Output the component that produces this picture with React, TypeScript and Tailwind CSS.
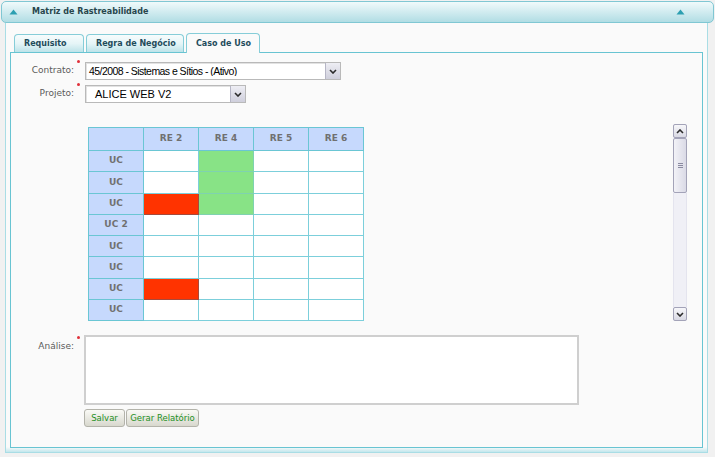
import React from 'react';

const cols = ['RE 2', 'RE 4', 'RE 5', 'RE 6'];

// g = verde, r = vermelho
const rows = [
  { label: 'UC', cells: ['', 'g', '', ''] },
  { label: 'UC', cells: ['', 'g', '', ''] },
  { label: 'UC', cells: ['r', 'g', '', ''] },
  { label: 'UC 2', cells: ['', '', '', ''] },
  { label: 'UC', cells: ['', '', '', ''] },
  { label: 'UC', cells: ['', '', '', ''] },
  { label: 'UC', cells: ['r', '', '', ''] },
  { label: 'UC', cells: ['', '', '', ''] },
];

const TriUp = () => (
  <svg width="9" height="6" viewBox="0 0 9 6">
    <path d="M0.5 5.5 L4.5 0.5 L8.5 5.5 Z" fill="#2c9fb1" />
  </svg>
);

const Chevron = ({ up = false }: { up?: boolean }) => (
  <svg width="8" height="5" viewBox="0 0 8 5">
    <path
      d={up ? 'M1 4 L4 1 L7 4' : 'M1 1 L4 4 L7 1'}
      fill="none"
      stroke="#2b2b2b"
      strokeWidth="1.6"
    />
  </svg>
);

const Required = () => <span className="block w-[3px] h-[3px] rounded-full bg-[#e0303a]" />;

const Select = ({ text, width, textClass }: { text: string; width: string; textClass: string }) => (
  <div className={`${width} h-[18px] flex items-center bg-white border border-[#b9b9b9] shadow-[inset_1px_1px_0_#e2e2e2]`}>
    <span className={`flex-1 ${textClass} text-black font-['Liberation_Sans',Arial,sans-serif] leading-none truncate`}>
      {text}
    </span>
    <div className="w-[15px] h-[16px] flex items-center justify-center bg-gradient-to-b from-[#eeeef4] to-[#cfcfdc] border-l border-[#b6b6c6]">
      <Chevron />
    </div>
  </div>
);

const Tab = ({ label, width, active = false }: { label: string; width: string; active?: boolean }) => (
  <div
    className={`${width} flex items-center pl-[9px] rounded-t-[4px] border border-b-0 border-[#86cdd8] text-[8px] font-bold text-[#1f4c5c] ${
      active ? 'h-[20px] bg-[#fafafa]' : 'h-[18px] mb-[1px] bg-gradient-to-b from-[#f7fcfd] via-[#e6f5f7] to-[#bde3e9]'
    }`}
  >
    {label}
  </div>
);

const ScrollBtn = ({ up = false }: { up?: boolean }) => (
  <div className="h-[14px] flex items-center justify-center rounded-[2px] border border-[#a3a3b8] bg-gradient-to-b from-[#f7f7fa] to-[#d9d9e4]">
    <Chevron up={up} />
  </div>
);

export default function App() {
  return (
    <div className="w-[715px] h-[457px] bg-[#f1f1f1] pt-[1px] overflow-hidden font-['DejaVu_Sans',Verdana,sans-serif]">
      {/* cabeçalho do painel */}
      <div className="mx-[1px] h-[22px] rounded-[5px] border border-[#80c7d3] bg-gradient-to-b from-[#f0fafb] to-[#b1dde4] flex items-center pl-[7px] pr-[28px]">
        <TriUp />
        <span className="ml-[14px] text-[8px] font-bold text-[#27464c]">Matriz de Rastreabilidade</span>
        <span className="ml-auto">
          <TriUp />
        </span>
      </div>

      {/* corpo */}
      <div className="ml-[5px] w-[703px] h-[430px] border-x border-b border-[#a9dde5] px-[4px] pt-[10px] bg-[linear-gradient(to_bottom,#fafafa_calc(100%_-_5px),#c2e7ed)]">
        <div className="flex items-end gap-[2px] pl-[4px] -mb-px relative z-10">
          <Tab label="Requisito" width="w-[70px]" />
          <Tab label="Regra de Negócio" width="w-[98px]" />
          <Tab label="Caso de Uso" width="w-[74px]" active />
        </div>

        <div className="w-[693px] h-[396px] border border-[#68c4d2] bg-[#fafafa] pt-[9px]">
          {/* Contrato */}
          <div className="flex items-center">
            <div className="w-[63px] text-right text-[9px] text-[#5a5a5a]">Contrato:</div>
            <div className="w-[11px] self-start pl-[3px] -mt-[2px]">
              <Required />
            </div>
            <Select
              text="45/2008 - Sistemas e Sítios - (Ativo)"
              width="w-[256px]"
              textClass="pl-[3px] text-[10.5px] tracking-[-0.55px]"
            />
          </div>

          {/* Projeto */}
          <div className="flex items-center mt-[5px]">
            <div className="w-[63px] text-right text-[9px] text-[#5a5a5a]">Projeto:</div>
            <div className="w-[11px] self-start pl-[3px] -mt-[2px]">
              <Required />
            </div>
            <Select text="ALICE WEB V2" width="w-[161px]" textClass="pl-[9px] text-[11px]" />
          </div>

          {/* matriz */}
          <div className="ml-[74px] mt-[21px] w-[603px] h-[197px] flex">
            <div className="flex-1 pl-[3px] pt-[3px]">
              <table className="border-collapse border border-[#55bfce] text-[9px] font-bold text-[#707070]">
                <thead>
                  <tr className="h-[23px] bg-[#c6d9fd]">
                    <th className="w-[55px] border border-[#6ac6d4]" />
                    {cols.map((c) => (
                      <th key={c} className="w-[55px] border border-[#6ac6d4] font-bold">
                        {c}
                      </th>
                    ))}
                  </tr>
                </thead>
                <tbody>
                  {rows.map((r, i) => (
                    <tr key={i} className="h-[21.3px]">
                      <td className="bg-[#c6d9fd] border border-[#6ac6d4] text-center">{r.label}</td>
                      {r.cells.map((c, j) => (
                        <td
                          key={j}
                          className={
                            c === 'g'
                              ? 'bg-[#88e386] border border-[#7fd2b0]'
                              : c === 'r'
                              ? 'bg-[#ff3300] border border-[#a64a3c]'
                              : 'bg-white border border-[#7ccfdb]'
                          }
                        />
                      ))}
                    </tr>
                  ))}
                </tbody>
              </table>
            </div>
            <div className="w-[14px] mr-[1px] flex flex-col bg-[#f0f0f6]">
              <ScrollBtn up />
              <div className="h-[55px] flex items-center justify-center rounded-[2px] border border-[#a3a3b8] bg-gradient-to-r from-[#f2f2f7] to-[#dadae6]">
                <div className="flex flex-col gap-[1px]">
                  <span className="block w-[5px] h-px bg-[#8a8aa0]" />
                  <span className="block w-[5px] h-px bg-[#8a8aa0]" />
                  <span className="block w-[5px] h-px bg-[#8a8aa0]" />
                </div>
              </div>
              <div className="flex-1 border-x border-[#e4e4ee]" />
              <ScrollBtn />
            </div>
          </div>

          {/* Análise */}
          <div className="flex items-start mt-[14px]">
            <div className="w-[63px] pt-[5px] text-right text-[9px] text-[#5a5a5a]">Análise:</div>
            <div className="w-[10px] pl-[3px] pt-[1px]">
              <Required />
            </div>
            <div className="w-[495px] h-[70px] bg-white border-2 border-[#cfcfcf]" />
          </div>

          <div className="flex ml-[73px] mt-[4px] gap-[1px]">
            <button className="w-[41px] h-[18px] rounded-[3px] border border-[#b3b3aa] bg-gradient-to-b from-[#fafaf6] to-[#d8d8ce] text-[8.5px] text-[#1e901e]">
              Salvar
            </button>
            <button className="w-[73px] h-[18px] rounded-[3px] border border-[#b3b3aa] bg-gradient-to-b from-[#fafaf6] to-[#d8d8ce] text-[8.5px] text-[#1e901e]">
              Gerar Relatório
            </button>
          </div>
        </div>
      </div>
    </div>
  );
}
